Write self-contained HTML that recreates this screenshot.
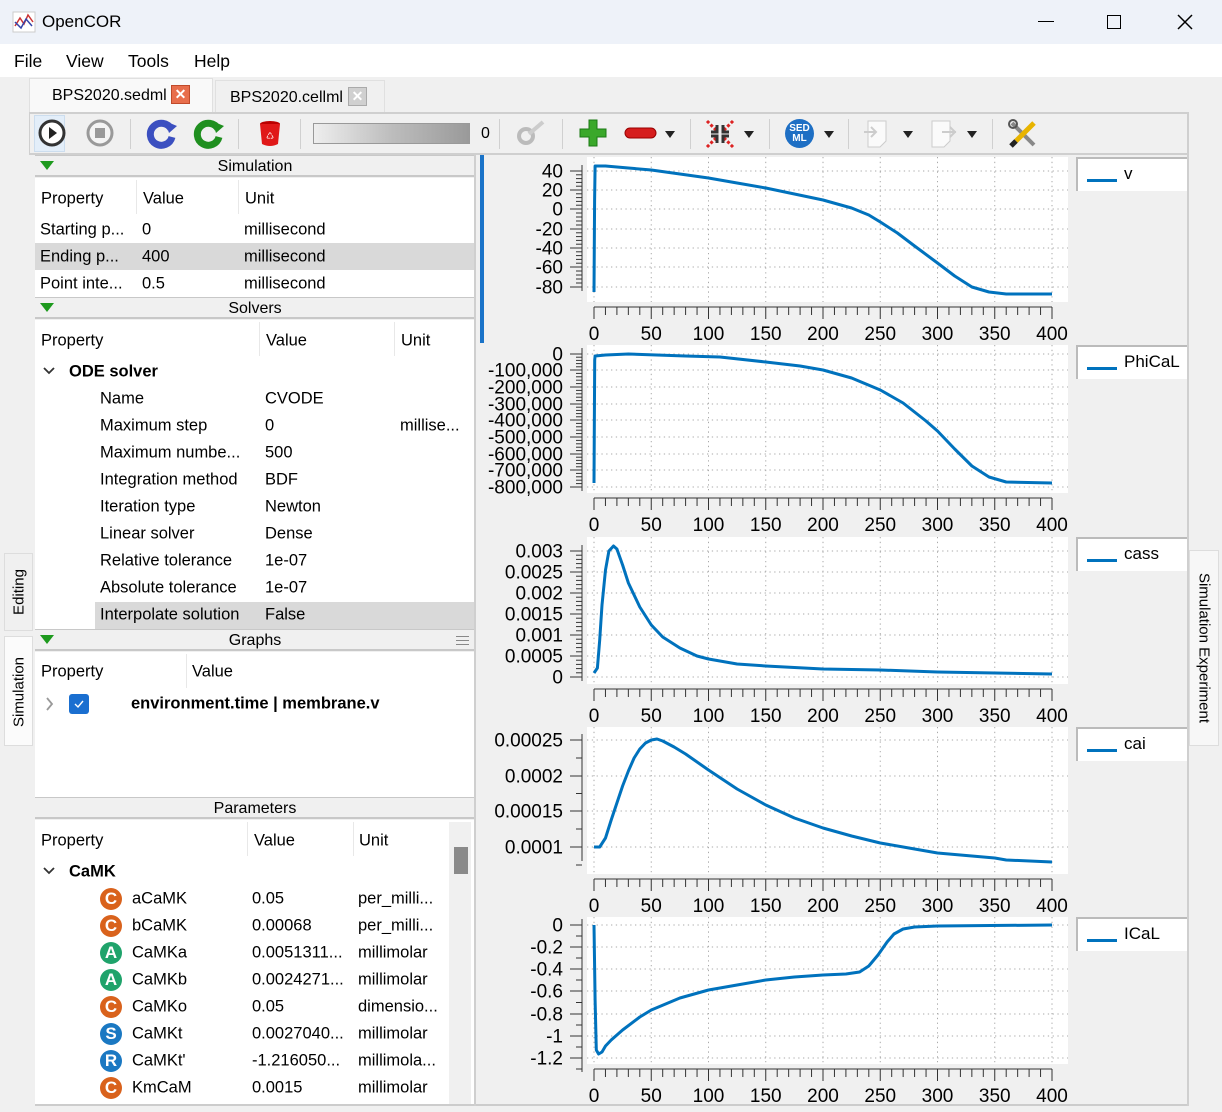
<!DOCTYPE html>
<html><head><meta charset="utf-8">
<style>
*{margin:0;padding:0;box-sizing:border-box}
body{width:1222px;height:1112px;overflow:hidden;background:#f0f0f0;font-family:"Liberation Sans",sans-serif;font-size:16.5px;color:#000;position:relative}
.a{position:absolute;white-space:nowrap}
.hdr{position:absolute;left:35px;width:440px;height:22px;background:#f0f0f0;border-top:1px solid #c8c8c8;border-bottom:2px solid #c8c8c8;text-align:center;line-height:21px;font-size:16px}
.tri{position:absolute;left:5px;top:5px;width:0;height:0;border-left:7px solid transparent;border-right:7px solid transparent;border-top:9px solid #1e9a1e}
.wh{position:absolute;background:#fff}
.t{position:absolute;white-space:nowrap;transform:translateY(-50%)}
.b{font-weight:bold}
.ic{position:absolute;width:22px;height:22px;border-radius:50%;color:#fff;font-weight:bold;font-size:17px;text-align:center;line-height:22px;transform:translateY(-50%)}
.legend{position:absolute;left:1076px;width:111px;height:34px;background:#fff;border-left:2px solid #bbb;border-top:2px solid #bbb}
.legend i{position:absolute;left:9px;top:20px;width:30px;height:3px;background:#0072bd}
.legend span{position:absolute;left:46px;top:5px;font-size:17px}
.sep{position:absolute;top:119px;width:1px;height:30px;background:#d0d0d0}
.dd{position:absolute;top:131px;width:0;height:0;border-left:5px solid transparent;border-right:5px solid transparent;border-top:7px solid #222}
</style></head><body>
<div class="a" style="left:0;top:0;width:1222px;height:44px;background:#eef2f9"></div>
<svg class="a" style="left:12px;top:10px" width="24" height="24"><rect x="1" y="2" width="22" height="20" fill="#fff" stroke="#ccc"/><path d="M3 16 L8 8 L12 14 L16 5 L21 12" stroke="#c33" fill="none" stroke-width="1.5"/><path d="M3 12 L9 18 L14 9 L20 16" stroke="#34a" fill="none" stroke-width="1.5"/></svg>
<div class="a" style="left:42px;top:12px;font-size:17px">OpenCOR</div>
<div class="a" style="left:1038px;top:21px;width:16px;height:1px;background:#000"></div>
<div class="a" style="left:1107px;top:15px;width:14px;height:14px;border:1.5px solid #000"></div>
<svg class="a" style="left:1177px;top:14px" width="16" height="16"><path d="M1 1L15 15M15 1L1 15" stroke="#000" stroke-width="1.5"/></svg>
<div class="a" style="left:0;top:44px;width:1222px;height:33px;background:#fff"></div>
<div class="a" style="left:14px;top:51px;font-size:17.5px">File</div>
<div class="a" style="left:66px;top:51px;font-size:17.5px">View</div>
<div class="a" style="left:128px;top:51px;font-size:17.5px">Tools</div>
<div class="a" style="left:194px;top:51px;font-size:17.5px">Help</div>
<!-- tabs -->
<div class="a" style="left:215px;top:80px;width:170px;height:33px;background:#f0f0f0;border:1px solid #e0e0e0;border-bottom:none"></div>
<div class="a" style="left:230px;top:89px;font-size:16px">BPS2020.cellml</div>
<div class="a" style="left:348px;top:87px;width:19px;height:19px;background:#d0d0d0;border:1px solid #aaa;color:#fff;font-size:14px;text-align:center;line-height:17px;font-weight:bold">✕</div>
<div class="a" style="left:29px;top:78px;width:184px;height:35px;background:#f9f9f9;border:1px solid #e0e0e0;border-bottom:none"></div>
<div class="a" style="left:52px;top:87px;font-size:16px">BPS2020.sedml</div>
<div class="a" style="left:171px;top:85px;width:19px;height:19px;background:#e86e4c;border:1px solid #c04a2a;color:#fff;font-size:14px;text-align:center;line-height:17px;font-weight:bold">✕</div>
<!-- toolbar -->
<div class="a" style="left:29px;top:112px;width:1160px;height:43px;background:#f0f0f0;border-top:2px solid #cfcfcf;border-bottom:2px solid #cfcfcf;border-left:1px solid #cfcfcf;border-right:2px solid #cfcfcf"></div>
<div class="a" style="left:34px;top:115px;width:31px;height:37px;background:#e3eef9;border:1px solid #cde"></div>
<svg class="a" style="left:37px;top:118px" width="30" height="30"><circle cx="15" cy="15" r="12" fill="#fff" stroke="#333" stroke-width="3"/><path d="M12 9L20 15L12 21Z" fill="#222"/></svg>
<svg class="a" style="left:85px;top:118px" width="30" height="30"><circle cx="15" cy="15" r="12" fill="#f4f4f4" stroke="#999" stroke-width="3"/><rect x="10" y="10" width="10" height="10" fill="#999"/></svg>
<div class="sep" style="left:130px"></div>
<svg class="a" style="left:145px;top:117px" width="34" height="32"><path d="M26 12 A11 11 0 1 0 27 20" stroke="#3b4fc0" stroke-width="7" fill="none"/><path d="M20 4 L32 9 L24 16Z" fill="#3b4fc0"/></svg>
<svg class="a" style="left:192px;top:117px" width="34" height="32"><path d="M26 12 A11 11 0 1 0 27 20" stroke="#1f8f1f" stroke-width="7" fill="none"/><path d="M20 4 L32 9 L24 16Z" fill="#1f8f1f"/></svg>
<div class="sep" style="left:238px"></div>
<svg class="a" style="left:256px;top:118px" width="28" height="30"><ellipse cx="14" cy="6" rx="10" ry="3" fill="#b00"/><path d="M4 6 L6 26 Q14 30 22 26 L24 6Z" fill="#e01818"/><text x="10" y="21" fill="#fff" font-size="9">♺</text></svg>
<div class="sep" style="left:300px"></div>
<div class="a" style="left:313px;top:123px;width:157px;height:21px;border:1px solid #999;background:linear-gradient(90deg,#eee,#bdbdbd 50%,#9a9a9a)"></div>
<div class="a" style="left:481px;top:125px;font-size:16px">0</div>
<div class="sep" style="left:499px"></div>
<svg class="a" style="left:515px;top:118px" width="32" height="30"><circle cx="11" cy="18" r="7" fill="none" stroke="#bbb" stroke-width="4"/><path d="M14 16 L28 4" stroke="#ccc" stroke-width="4"/></svg>
<div class="sep" style="left:562px"></div>
<svg class="a" style="left:578px;top:118px" width="30" height="30"><path d="M11 2h8v9h9v8h-9v9h-8v-9H2v-8h9z" fill="#3aa82a" stroke="#1b7a14"/></svg>
<svg class="a" style="left:624px;top:125px" width="34" height="16"><rect x="1" y="3" width="31" height="10" rx="5" fill="#d61d1d" stroke="#900"/></svg>
<div class="dd" style="left:665px"></div>
<div class="sep" style="left:690px"></div>
<svg class="a" style="left:704px;top:118px" width="32" height="32"><path d="M3 3L12 12M29 3L20 12M3 29L12 20M29 29L20 20" stroke="#d22" stroke-width="3" stroke-dasharray="3 2"/><path d="M13 7v7H7M19 7v7h6M13 25v-7H7M19 25v-7h6" stroke="#333" stroke-width="3" fill="none"/></svg>
<div class="dd" style="left:744px"></div>
<div class="sep" style="left:769px"></div>
<div class="a" style="left:785px;top:119px;width:29px;height:29px;border-radius:50%;background:#1e6fc4;color:#fff;font-size:10px;font-weight:bold;text-align:center;line-height:10px;padding-top:5px">SED<br>ML</div>
<div class="dd" style="left:824px"></div>
<div class="sep" style="left:848px"></div>
<svg class="a" style="left:862px;top:118px" width="30" height="32"><path d="M6 3h18v20l-6 6H6z" fill="#fafafa" stroke="#ccc"/><path d="M2 14h12M9 9l5 5-5 5" stroke="#ccc" stroke-width="2" fill="none"/></svg>
<div class="dd" style="left:903px"></div>
<svg class="a" style="left:928px;top:118px" width="30" height="32"><path d="M4 3h18v20l-6 6H4z" fill="#fafafa" stroke="#ccc"/><path d="M14 14h14M22 9l5 5-5 5" stroke="#ccc" stroke-width="2" fill="none"/></svg>
<div class="dd" style="left:967px"></div>
<div class="sep" style="left:992px"></div>
<svg class="a" style="left:1007px;top:118px" width="32" height="32"><path d="M5 5L27 27" stroke="#888" stroke-width="4"/><path d="M27 5L9 23" stroke="#e8b400" stroke-width="5"/><path d="M9 23L4 28" stroke="#222" stroke-width="5"/><circle cx="6" cy="6" r="4" fill="none" stroke="#555" stroke-width="2"/></svg>

<div class="a" style="left:4px;top:553px;width:29px;height:78px;background:#f0f0f0;border:1px solid #ddd"></div>
<div class="a" style="left:4px;top:636px;width:29px;height:110px;background:#fbfbfb;border:1px solid #ddd"></div>
<div class="a" style="left:19px;top:592px;transform:translate(-50%,-50%) rotate(-90deg);font-size:15px">Editing</div>
<div class="a" style="left:19px;top:692px;transform:translate(-50%,-50%) rotate(-90deg);font-size:15px">Simulation</div>
<div class="a" style="left:1189px;top:550px;width:30px;height:196px;background:#f7f7f7;border:1px solid #ddd"></div>
<div class="a" style="left:1204px;top:648px;transform:translate(-50%,-50%) rotate(90deg);font-size:15px">Simulation Experiment</div>

<div class="wh" style="left:35px;top:178px;width:440px;height:120px"></div>
<div class="a" style="left:35px;top:243px;width:440px;height:27px;background:#d9d9d9"></div>
<div class="hdr" style="top:155px"><div class="tri"></div>Simulation</div>
<div class="a" style="left:136px;top:180px;width:1px;height:34px;background:#e8e8e8"></div>
<div class="a" style="left:238px;top:180px;width:1px;height:34px;background:#e8e8e8"></div>
<div class="t" style="left:41px;top:199px">Property</div><div class="t" style="left:143px;top:199px">Value</div><div class="t" style="left:245px;top:199px">Unit</div>
<div class="t" style="left:40px;top:230px">Starting p...</div><div class="t" style="left:142px;top:230px">0</div><div class="t" style="left:244px;top:230px">millisecond</div>
<div class="t" style="left:40px;top:257px">Ending p...</div><div class="t" style="left:142px;top:257px">400</div><div class="t" style="left:244px;top:257px">millisecond</div>
<div class="t" style="left:40px;top:284px">Point inte...</div><div class="t" style="left:142px;top:284px">0.5</div><div class="t" style="left:244px;top:284px">millisecond</div>

<div class="wh" style="left:35px;top:320px;width:440px;height:310px"></div>
<div class="a" style="left:95px;top:602px;width:380px;height:27px;background:#d9d9d9"></div>
<div class="hdr" style="top:297px"><div class="tri"></div>Solvers</div>
<div class="a" style="left:259px;top:322px;width:1px;height:34px;background:#e8e8e8"></div>
<div class="a" style="left:394px;top:322px;width:1px;height:34px;background:#e8e8e8"></div>
<div class="t" style="left:41px;top:341px">Property</div><div class="t" style="left:266px;top:341px">Value</div><div class="t" style="left:401px;top:341px">Unit</div>
<svg class="a" style="left:43px;top:367px" width="12" height="9"><path d="M1 1L6 6L11 1" stroke="#333" stroke-width="1.8" fill="none"/></svg>
<div class="t b" style="left:69px;top:372px">ODE solver</div>
<div class="t" style="left:100px;top:399px">Name</div><div class="t" style="left:265px;top:399px">CVODE</div>
<div class="t" style="left:100px;top:426px">Maximum step</div><div class="t" style="left:265px;top:426px">0</div><div class="t" style="left:400px;top:426px">millise...</div>
<div class="t" style="left:100px;top:453px">Maximum numbe...</div><div class="t" style="left:265px;top:453px">500</div>
<div class="t" style="left:100px;top:480px">Integration method</div><div class="t" style="left:265px;top:480px">BDF</div>
<div class="t" style="left:100px;top:507px">Iteration type</div><div class="t" style="left:265px;top:507px">Newton</div>
<div class="t" style="left:100px;top:534px">Linear solver</div><div class="t" style="left:265px;top:534px">Dense</div>
<div class="t" style="left:100px;top:561px">Relative tolerance</div><div class="t" style="left:265px;top:561px">1e-07</div>
<div class="t" style="left:100px;top:588px">Absolute tolerance</div><div class="t" style="left:265px;top:588px">1e-07</div>
<div class="t" style="left:100px;top:615px">Interpolate solution</div><div class="t" style="left:265px;top:615px">False</div>

<div class="wh" style="left:35px;top:652px;width:440px;height:146px"></div>
<div class="hdr" style="top:629px"><div class="tri"></div>Graphs<div style="position:absolute;right:6px;top:6px;width:13px;height:9px;border-top:1.5px solid #888;border-bottom:1.5px solid #888"><div style="margin-top:2.5px;height:1.5px;background:#888"></div></div></div>
<div class="a" style="left:186px;top:654px;width:1px;height:34px;background:#e8e8e8"></div>
<div class="t" style="left:41px;top:672px">Property</div><div class="t" style="left:192px;top:672px">Value</div>
<svg class="a" style="left:45px;top:697px" width="9" height="14"><path d="M2 1L7 7L2 13" stroke="#999" stroke-width="1.8" fill="none"/></svg>
<div class="a" style="left:69px;top:694px;width:20px;height:20px;border-radius:3px;background:#1a6fd0"><svg width="20" height="20"><path d="M6 10l3 3 5-6" stroke="#fff" stroke-width="1.4" fill="none"/></svg></div>
<div class="t b" style="left:131px;top:704px">environment.time | membrane.v</div>

<div class="wh" style="left:35px;top:820px;width:440px;height:286px"></div>
<div class="hdr" style="top:797px">Parameters</div>
<div class="a" style="left:247px;top:822px;width:1px;height:34px;background:#e8e8e8"></div>
<div class="a" style="left:353px;top:822px;width:1px;height:34px;background:#e8e8e8"></div>
<div class="a" style="left:449px;top:822px;width:22px;height:284px;background:#f0f0f0"></div>
<div class="a" style="left:454px;top:847px;width:14px;height:27px;background:#8a8a8a"></div>
<div class="t" style="left:41px;top:841px">Property</div><div class="t" style="left:254px;top:841px">Value</div><div class="t" style="left:359px;top:841px">Unit</div>
<svg class="a" style="left:43px;top:867px" width="12" height="9"><path d="M1 1L6 6L11 1" stroke="#333" stroke-width="1.8" fill="none"/></svg>
<div class="t b" style="left:69px;top:872px">CaMK</div>
<div class="a" style="left:0;top:0;width:449px;height:1104px;overflow:hidden"><div id="params"></div></div>
<div class="a" style="left:35px;top:1104px;width:1154px;height:8px;background:#f0f0f0;border-top:2px solid #ccc"></div>
<div class="a" style="left:474px;top:155px;width:2px;height:951px;background:#cfcfcf"></div>
<div class="a" style="left:480px;top:155px;width:4px;height:188px;background:#1a73c8"></div>
<div class="a" style="left:1187px;top:155px;width:2px;height:951px;background:#cfcfcf"></div>

<svg id="plots" class="a" style="left:0;top:0" width="1222" height="1112"></svg>
<div id="legends"></div>

<script>
var P=[["C","aCaMK","0.05","per_milli..."],["C","bCaMK","0.00068","per_milli..."],["A","CaMKa","0.0051311...","millimolar"],["A","CaMKb","0.0024271...","millimolar"],["C","CaMKo","0.05","dimensio..."],["S","CaMKt","0.0027040...","millimolar"],["R","CaMKt'","-1.216050...","millimola..."],["C","KmCaM","0.0015","millimolar"],["C","","",""]];
var col={C:"#d9621c",A:"#1fa36b",S:"#1a78c2",R:"#1a78c2"};
var h="";P.forEach(function(p,i){var y=899+27*i;h+='<div class="ic" style="left:100px;top:'+y+'px;background:'+col[p[0]]+'">'+p[0]+'</div><div class="t" style="left:132px;top:'+y+'px">'+p[1]+'</div><div class="t" style="left:252px;top:'+y+'px">'+p[2]+'</div><div class="t" style="left:358px;top:'+y+'px">'+p[3]+'</div>';});
document.getElementById("params").innerHTML=h;

function X(t){return 594+t*1.145;}
var plots=[
 {top:157,bot:302,lab:[["40",171],["20",190],["0",209],["-20",229],["-40",248],["-60",267],["-80",287]],minor:4,leg:"v",
  pts:[[0,292],[0.5,200],[1,166],[10,166],[30,168],[50,170],[75,174],[100,178],[125,183],[150,188],[175,194],[200,200],[225,208],[240,215],[250,222],[265,233],[280,246],[300,263],[315,276],[330,287],[345,292],[360,294],[400,294]]},
 {top:345,bot:493,lab:[["0",354],["-100,000",370],["-200,000",387],["-300,000",404],["-400,000",420],["-500,000",437],["-600,000",454],["-700,000",470],["-800,000",487]],minor:4,leg:"PhiCaL",
  pts:[[0,483],[0.6,360],[1,356],[10,355],[30,354],[80,356],[110,357],[150,362],[180,366],[200,370],[225,378],[250,390],[270,403],[290,421],[300,431],[315,449],[330,466],[345,477],[360,482],[400,483]]},
 {top:537,bot:684,lab:[["0.003",551],["0.0025",572],["0.002",593],["0.0015",614],["0.001",635],["0.0005",656],["0",677]],minor:4,leg:"cass",
  pts:[[0,673],[3,668],[5,640],[7,605],[10,570],[13,551],[17,546],[20,549],[25,565],[30,583],[40,607],[50,625],[60,637],[75,648],[90,656],[100,659],[125,664],[150,666],[200,669],[250,670],[300,672],[400,674]]},
 {top:727,bot:874,lab:[["0.00025",740],["0.0002",776],["0.00015",811],["0.0001",847]],minor:1,leg:"cai",
  pts:[[0,847],[5,847],[10,838],[15,820],[20,803],[25,786],[30,771],[35,758],[40,749],[45,743],[50,740],[55,739],[60,741],[70,747],[80,754],[100,770],[125,789],[150,805],[175,818],[200,828],[225,836],[250,843],[275,848],[300,853],[350,858],[360,860],[400,862]]},
 {top:917,bot:1064,lab:[["0",925],["-0.2",947],["-0.4",969],["-0.6",991],["-0.8",1014],["-1",1036],["-1.2",1058]],minor:1,leg:"ICaL",
  pts:[[0,925],[1,1000],[2,1050],[4,1054],[7,1052],[10,1046],[15,1040],[25,1030],[40,1017],[50,1010],[75,998],[100,990],[125,985],[150,980],[175,977],[200,975],[220,974],[232,972],[240,966],[248,955],[256,942],[262,934],[270,929],[280,927],[300,926],[400,925]]}
];
var s="",L="";
plots.forEach(function(p){
 s+='<rect x="587" y="'+p.top+'" width="481" height="'+(p.bot-p.top)+'" fill="#fff"/>';
 for(var t=0;t<=400;t+=50){var x=X(t);s+='<line x1="'+x+'" y1="'+p.top+'" x2="'+x+'" y2="'+p.bot+'" stroke="#aaa" stroke-dasharray="1.3 3.5"/>';}
 p.lab.forEach(function(l){s+='<line x1="587" y1="'+l[1]+'" x2="1068" y2="'+l[1]+'" stroke="#aaa" stroke-dasharray="1.3 3.5"/>';
   s+='<text x="563" y="'+(l[1]+6.5)+'" text-anchor="end" font-size="19" font-family="Liberation Sans">'+l[0]+'</text>';
   s+='<line x1="570" y1="'+l[1]+'" x2="582" y2="'+l[1]+'" stroke="#333"/>';});
 var ls=p.lab;for(var i=0;i<ls.length-1;i++){var d=(ls[i+1][1]-ls[i][1])/(p.minor+1);for(var k=1;k<=p.minor;k++){var y=ls[i][1]+d*k;s+='<line x1="576" y1="'+y+'" x2="582" y2="'+y+'" stroke="#333"/>';}}
 if(p.minor==1){var d2=(ls[1][1]-ls[0][1])/2;s+='<line x1="576" y1="'+(ls[ls.length-1][1]+d2)+'" x2="582" y2="'+(ls[ls.length-1][1]+d2)+'" stroke="#333"/>';}
 s+='<line x1="582" y1="'+(ls[0][1]-6)+'" x2="582" y2="'+(ls[ls.length-1][1]+(p.minor==1?14:4))+'" stroke="#333"/>';
 var ay=p.bot+5;
 s+='<line x1="594" y1="'+ay+'" x2="1052" y2="'+ay+'" stroke="#333"/>';
 for(var t=0;t<=400;t+=10){var x=X(t);s+='<line x1="'+x+'" y1="'+ay+'" x2="'+x+'" y2="'+(ay+(t%50==0?12:8))+'" stroke="#333"/>';}
 for(var t=0;t<=400;t+=50){s+='<text x="'+X(t)+'" y="'+(ay+33)+'" text-anchor="middle" font-size="19" font-family="Liberation Sans">'+t+'</text>';}
 s+='<polyline fill="none" stroke="#0072bd" stroke-width="3" stroke-linejoin="round" points="'+p.pts.map(function(q){return X(q[0]).toFixed(1)+','+q[1];}).join(' ')+'"/>';
 L+='<div class="legend" style="top:'+p.top+'px"><i></i><span>'+p.leg+'</span></div>';
});
document.getElementById("plots").innerHTML=s;
document.getElementById("legends").innerHTML=L;
</script>
</body></html>
